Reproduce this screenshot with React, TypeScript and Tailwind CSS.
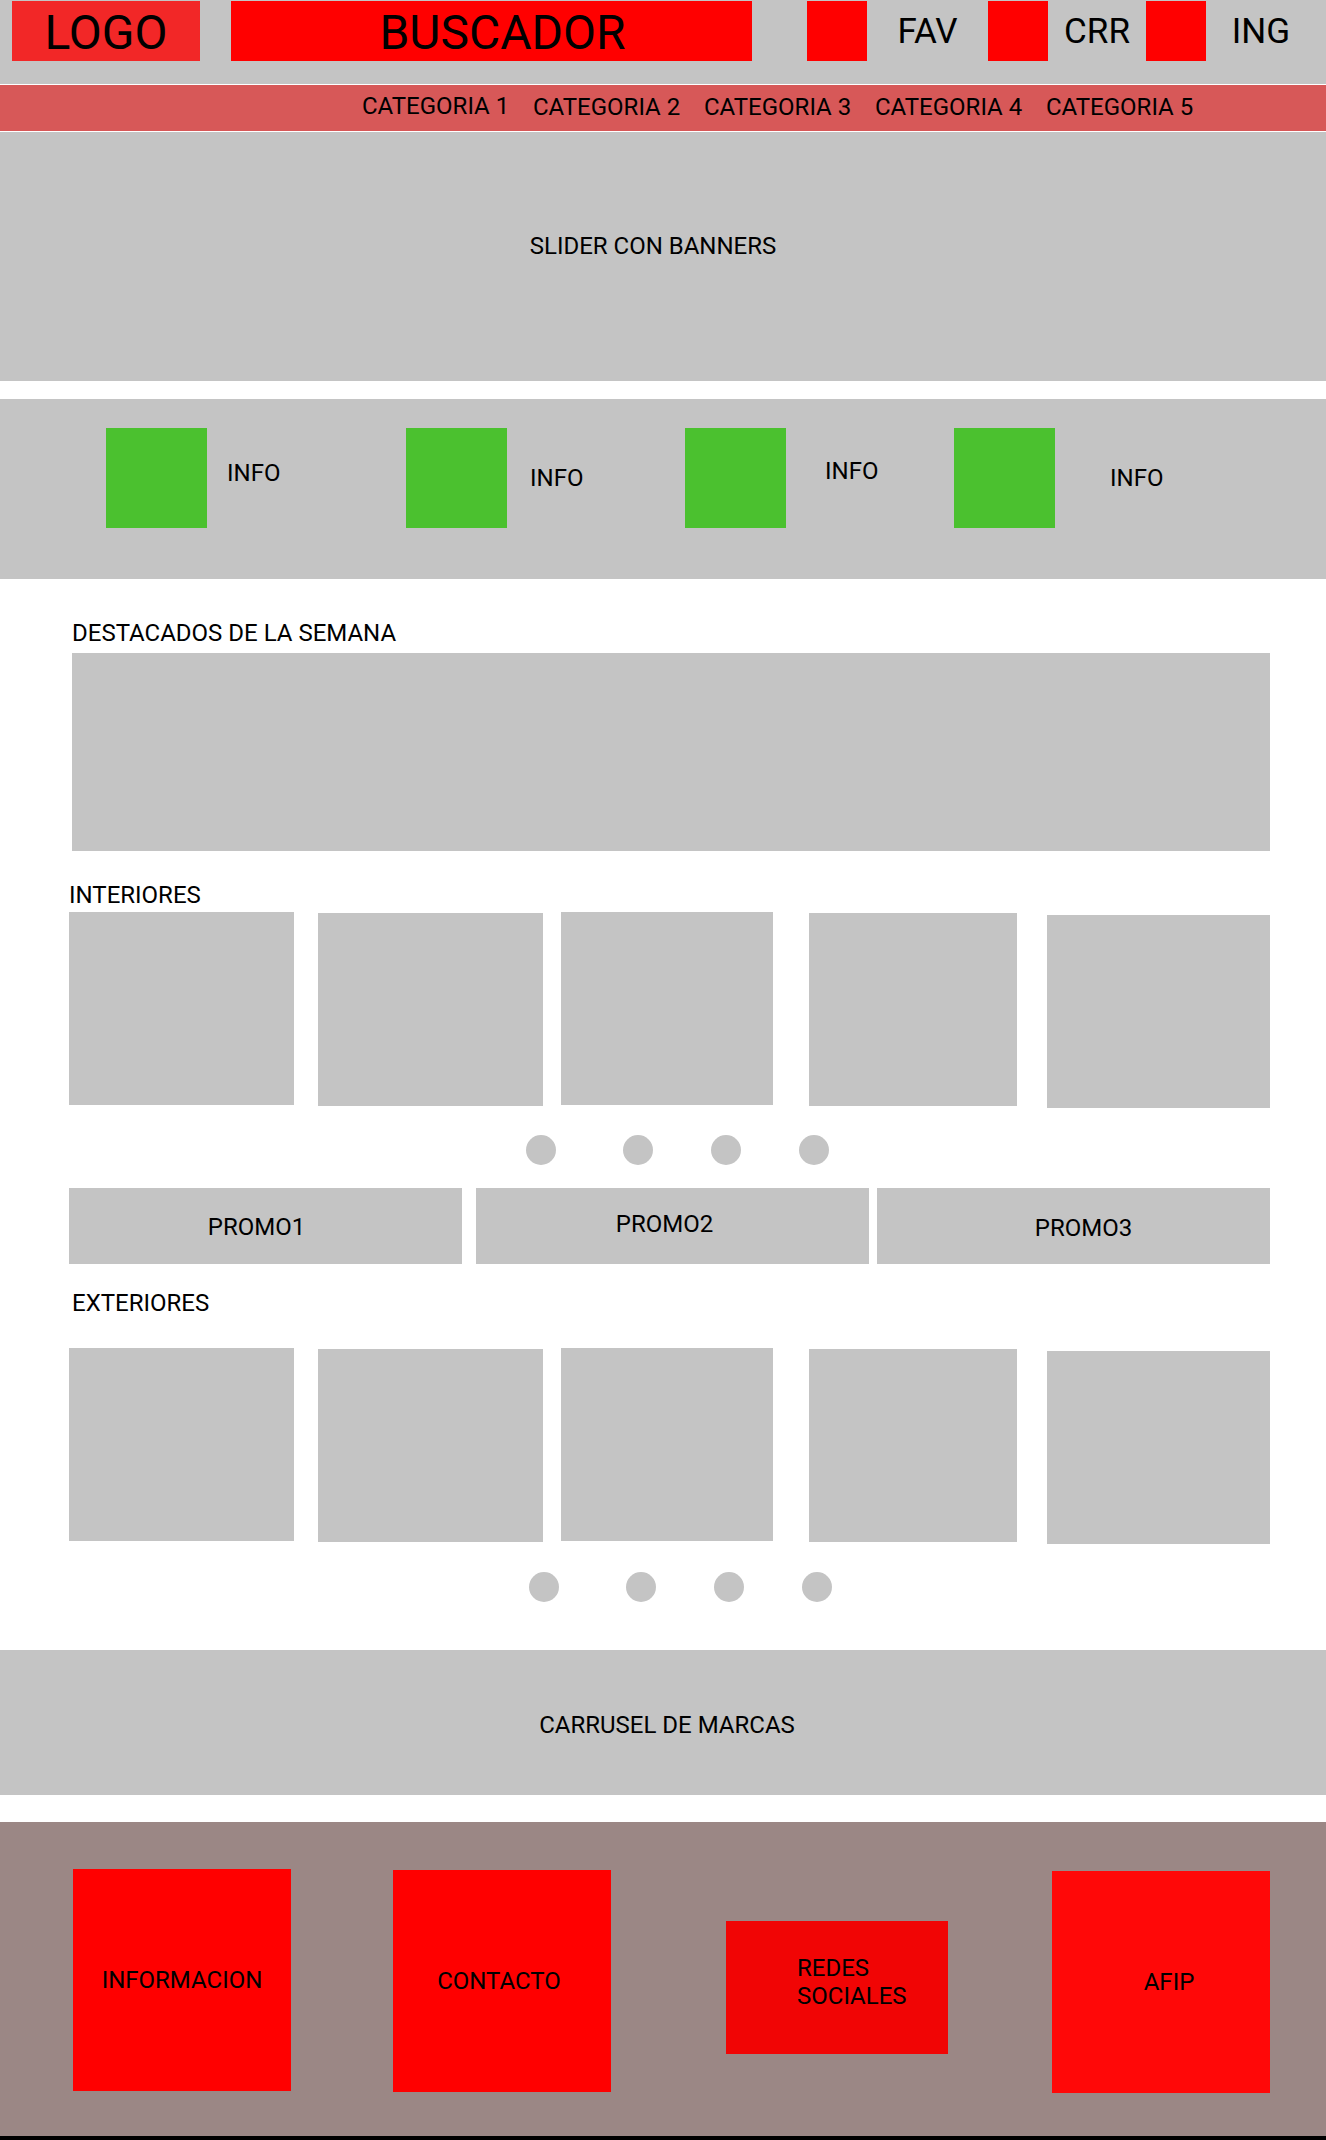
const categories = ["CATEGORIA 1", "CATEGORIA 2", "CATEGORIA 3", "CATEGORIA 4", "CATEGORIA 5"];

// per-item offsets tuned to the mockup (it is hand-placed, not a perfect grid)
const infos = [
  { w: "w-[300px]", gap: "ml-[20px]", shift: "-mt-[10px]" },
  { w: "w-[279px]", gap: "ml-[23px]", shift: "mt-0" },
  { w: "w-[269px]", gap: "ml-[39px]", shift: "-mt-[14px]" },
  { w: "w-[300px]", gap: "ml-[55px]", shift: "mt-0" },
];

const cards = [
  { cls: "ml-[69px] w-[225px] mt-0" },
  { cls: "ml-[24px] w-[225px] mt-[1px]" },
  { cls: "ml-[18px] w-[212px] mt-0" },
  { cls: "ml-[36px] w-[208px] mt-[1px]" },
  { cls: "ml-[30px] w-[223px] mt-[3px]" },
];

const CardRow = () => (
  <div className="flex items-start h-[196px]">
    {cards.map((c, i) => (
      <div key={i} className={`${c.cls} h-[193px] bg-[#c4c4c4]`} />
    ))}
  </div>
);

const Dots = ({ offset }: { offset: string }) => (
  <div className={`flex ${offset}`}>
    <div className="w-[30px] h-[30px] rounded-full bg-[#c4c4c4]" />
    <div className="ml-[67px] w-[30px] h-[30px] rounded-full bg-[#c4c4c4]" />
    <div className="ml-[58px] w-[30px] h-[30px] rounded-full bg-[#c4c4c4]" />
    <div className="ml-[58px] w-[30px] h-[30px] rounded-full bg-[#c4c4c4]" />
  </div>
);

const FooterBox = ({ children, cls }: { children: React.ReactNode; cls: string }) => (
  <div className={`flex items-center justify-center ${cls}`}>{children}</div>
);

export default function App() {
  return (
    <div className="w-[1326px] h-[2140px] bg-white text-black text-[24px] leading-[28px] font-['Roboto',sans-serif] overflow-hidden">
      {/* header */}
      <header className="h-[84px] bg-[#c4c4c4] flex items-start pt-px pl-[12px]">
        <div className="w-[188px] h-[60px] bg-[#f22727] flex items-center justify-center text-[48px] leading-none pt-[4px]">LOGO</div>
        <div className="ml-[31px] w-[521px] h-[60px] bg-[#ff0000] flex items-center justify-center text-[48px] leading-none pt-[4px] pl-[22px]">BUSCADOR</div>
        <div className="ml-[55px] w-[60px] h-[60px] bg-[#ff0000]" />
        <div className="w-[121px] h-[60px] flex items-center justify-center text-[35px] leading-none">FAV</div>
        <div className="w-[60px] h-[60px] bg-[#ff0000]" />
        <div className="w-[98px] h-[60px] flex items-center justify-center text-[35px] leading-none">CRR</div>
        <div className="w-[60px] h-[60px] bg-[#ff0000]" />
        <div className="w-[110px] h-[60px] flex items-center justify-center text-[35px] leading-none">ING</div>
      </header>

      {/* categorias */}
      <nav className="h-[48px] bg-[#d75858] border-y border-white flex items-center pl-[362px] pb-[4px]">
        {categories.map((c, i) => (
          <div key={c} className={i === 0 ? "w-[171px]" : "w-[171px] pt-[2px]"}>{c}</div>
        ))}
      </nav>

      {/* slider */}
      <section className="h-[249px] bg-[#c4c4c4] flex items-center justify-center pr-[20px] pb-[22px]">
        SLIDER CON BANNERS
      </section>

      {/* info */}
      <section className="mt-[18px] h-[180px] bg-[#c4c4c4] flex items-start pt-[29px] pl-[106px]">
        {infos.map((info, i) => (
          <div key={i} className={`${info.w} flex items-center`}>
            <div className="w-[101px] h-[100px] bg-[#4bc12f]" />
            <span className={`${info.gap} ${info.shift}`}>INFO</span>
          </div>
        ))}
      </section>

      {/* destacados */}
      <section className="pl-[72px] pt-[40px]">
        <h2>DESTACADOS DE LA SEMANA</h2>
        <div className="mt-[6px] w-[1198px] h-[198px] bg-[#c4c4c4]" />
      </section>

      {/* interiores */}
      <section className="pt-[30px]">
        <h2 className="pl-[69px] h-[31px]">INTERIORES</h2>
        <CardRow />
        <Dots offset="ml-[526px] mt-[27px]" />
        <div className="flex mt-[23px] h-[76px]">
          <div className="ml-[69px] w-[393px] bg-[#c4c4c4] flex items-center justify-center pr-[18px] pt-[2px]">PROMO1</div>
          <div className="ml-[14px] w-[393px] bg-[#c4c4c4] flex items-center justify-center pr-[16px] pb-[4px]">PROMO2</div>
          <div className="ml-[8px] w-[393px] bg-[#c4c4c4] flex items-center justify-center pl-[20px] pt-[4px]">PROMO3</div>
        </div>
      </section>

      {/* exteriores */}
      <section className="pt-[25px]">
        <h2 className="pl-[72px] h-[59px]">EXTERIORES</h2>
        <CardRow />
        <Dots offset="ml-[529px] mt-[28px]" />
      </section>

      {/* marcas */}
      <section className="mt-[48px] h-[145px] bg-[#c4c4c4] flex items-center justify-center pt-[5px] pl-[8px]">
        CARRUSEL DE MARCAS
      </section>

      {/* footer */}
      <footer className="mt-[27px] h-[318px] bg-[#9b8785] border-b-4 border-black flex items-start pt-[47px]">
        <FooterBox cls="ml-[73px] w-[218px] h-[222px] bg-[#ff0000]">INFORMACION</FooterBox>
        <FooterBox cls="ml-[102px] mt-px w-[218px] h-[222px] bg-[#ff0000] pr-[6px]">CONTACTO</FooterBox>
        <div className="ml-[115px] mt-[52px] w-[222px] h-[133px] bg-[#f10505] flex items-center pl-[71px] pb-[12px] leading-[28px]">
          REDES<br />SOCIALES
        </div>
        <FooterBox cls="ml-[104px] mt-[2px] w-[218px] h-[222px] bg-[#ff0808] pl-[16px]">AFIP</FooterBox>
      </footer>
    </div>
  );
}
